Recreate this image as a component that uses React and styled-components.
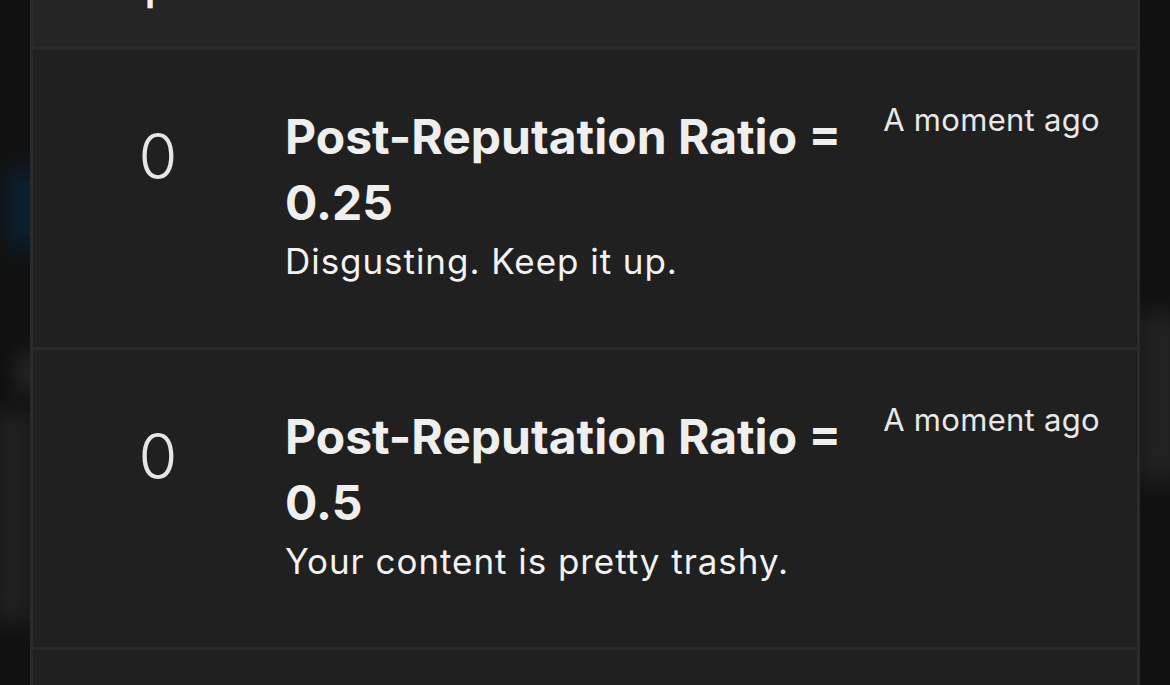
import React from 'react';
import styled, { createGlobalStyle } from 'styled-components';

const PAGE = '#111111';
const PANEL = '#202020';
const HEADER = '#252525';
const LINE = '#2a2a2a';
const TEXT = '#f2f2f2';

const notifications = [
  { score: 0, ratio: '0.25', message: 'Disgusting. Keep it up.', time: 'A moment ago' },
  { score: 0, ratio: '0.5', message: 'Your content is pretty trashy.', time: 'A moment ago' },
];

const GlobalStyle = createGlobalStyle`
  html, body {
    margin: 0;
    padding: 0;
    background: ${PAGE};
    height: 685px;
    overflow: hidden;
  }
  body {
    font-family: Inter, "Liberation Sans", sans-serif;
    -webkit-font-smoothing: antialiased;
  }
`;

const Screen = styled.div`
  position: relative;
  height: 685px;
  overflow: hidden;
  display: flex;
  justify-content: center;
`;

// blurred shapes of the page sitting behind the sheet
const Glow = styled.div`
  position: absolute;
  left: ${props => props.x}px;
  top: ${props => props.y}px;
  width: ${props => props.w}px;
  height: ${props => props.h}px;
  background: ${props => props.color};
  border-radius: 12px;
  filter: blur(${props => props.blur || 10}px);
`;

const Sheet = styled.div`
  position: relative;
  width: 1110px;
  box-sizing: border-box;
  border-left: 3px solid ${LINE};
  border-right: 3px solid ${LINE};
  background: ${PANEL};
  display: flex;
  flex-direction: column;
`;

const Header = styled.div`
  height: 47px;
  flex-shrink: 0;
  background: ${HEADER};
  overflow: hidden;
  padding-left: 111px;
`;

const HeaderTitle = styled.div`
  margin-top: -42px;
  font-size: 48px;
  line-height: 48px;
  font-weight: 500;
  color: ${TEXT};
`;

const Row = styled.div`
  height: 300px;
  flex-shrink: 0;
  box-sizing: border-box;
  border-top: 3px solid ${LINE};
  display: flex;
  align-items: flex-start;
  padding: 54px 37px 0 0;
`;

const Score = styled.div`
  width: 250px;
  flex-shrink: 0;
  margin-top: 21px;
  text-align: center;
  font-size: 63px;
  line-height: 1;
  font-weight: 350;
  color: #e6e6e6;
`;

const Content = styled.div`
  flex: 1;
  min-width: 0;
  padding-left: 2px;
`;

const Title = styled.div`
  font-size: 48px;
  line-height: 66px;
  font-weight: 700;
  color: #efefef;
  max-width: 580px;
`;

const Message = styled.div`
  margin-top: 3px;
  font-size: 35px;
  line-height: 44px;
  font-weight: 400;
  letter-spacing: 0.95px;
  color: ${TEXT};
`;

const Time = styled.div`
  flex-shrink: 0;
  margin-left: 30px;
  margin-top: -2px;
  font-size: 31px;
  line-height: 36px;
  font-weight: 400;
  letter-spacing: 0.3px;
  color: #e8e8e8;
`;

const Notification = ({ item }) => (
  <Row>
    <Score>{item.score}</Score>
    <Content>
      <Title>Post-Reputation Ratio = {item.ratio}</Title>
      <Message>{item.message}</Message>
    </Content>
    <Time>{item.time}</Time>
  </Row>
);

export default function App() {
  return (
    <Screen>
      <GlobalStyle />
      <Glow x={12} y={168} w={26} h={80} color="rgba(0, 70, 130, 0.42)" blur={14} />
      <Glow x={16} y={350} w={20} h={45} color="#242424" blur={8} />
      <Glow x={-10} y={410} w={46} h={215} color="#202020" blur={12} />
      <Glow x={1136} y={312} w={50} h={170} color="#222222" blur={12} />
      <Sheet>
        <Header>
          <HeaderTitle>p</HeaderTitle>
        </Header>
        {notifications.map((item, i) => (
          <Notification key={i} item={item} />
        ))}
        <Row />
      </Sheet>
    </Screen>
  );
}
